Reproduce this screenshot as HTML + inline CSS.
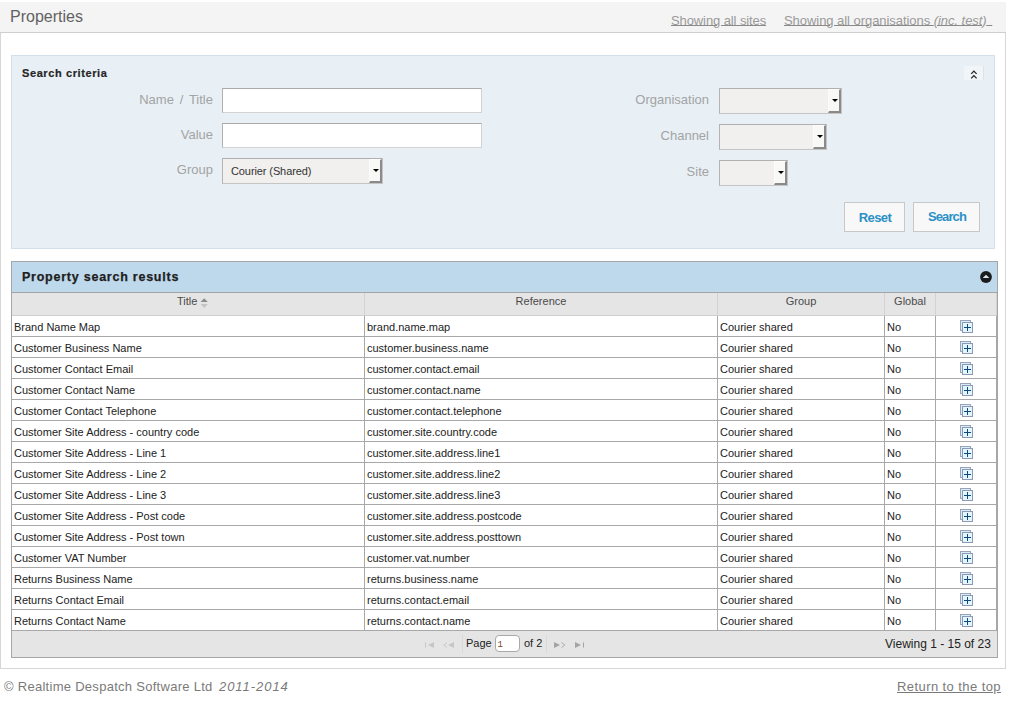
<!DOCTYPE html>
<html><head><meta charset="utf-8">
<style>
*{box-sizing:border-box;margin:0;padding:0}
html,body{width:1010px;height:702px;overflow:hidden;background:#fff;font-family:"Liberation Sans",sans-serif;position:relative}
.abs{position:absolute}
#hdr{left:0;top:2px;width:1006px;height:31px;background:#f4f4f4;border-bottom:1px solid #cfcfcf}
#title{left:10px;top:5px;font-size:16px;color:#626262;line-height:20px}
.toplink{top:11px;text-underline-offset:0px;font-size:13px;color:#9a9a9a;text-decoration:underline;text-decoration-color:#8a8a8a;line-height:16px;white-space:pre}
#panel{left:0;top:33px;width:1006px;height:636px;border:1px solid #d6d6d6;border-top:none}
#crit{left:11px;top:55px;width:984px;height:194px;background:#e8f0f6;border:1px solid #d3e0ea}
#crit h3{position:absolute;left:10px;top:10px;font-size:11px;letter-spacing:0.6px;font-weight:bold;color:#262626;line-height:14px;-webkit-text-stroke:0.2px #262626}
.lbl{font-size:13px;color:#a3a3a3;line-height:16px;text-align:right;white-space:pre}
.inp{background:#fff;border:1px solid #d3d3d3;border-top-color:#a9a9a9;border-left-color:#b1b1b1}
.sel{background:#f1f0ee;border:1px solid #c4c4c4;border-top-color:#b0b0b0;border-left-color:#b4b4b4}
.selbtn{position:absolute;top:0;right:0;bottom:0;width:13px;background:#f8f8f7;border-top:1px solid #fdfdfd;border-left:1px solid #fbfbfa;border-right:2px solid #8a8a8a;border-bottom:2px solid #8a8a8a}
.selbtn:after{content:"";position:absolute;left:2.7px;top:9px;border-left:3.7px solid transparent;border-right:3.7px solid transparent;border-top:3.7px solid #000}
.seltxt{position:absolute;left:8px;top:6px;font-size:11px;letter-spacing:-0.1px;color:#333;line-height:13px;white-space:pre}
.btn{background:#f8f8f8;border:1px solid #c8c8c8;color:#2b90c6;font-weight:bold;font-size:13px;text-align:center;line-height:16px}
#chev{left:964px;top:66px;width:20px;height:14px;background:#f2f5f8;border-right:1px solid #dde3e8}
#res{left:11px;top:261px;width:987px;height:397px;border:1px solid #a6a6a6}
#resh{left:0;top:0;width:985px;height:31px;background:#bed8ec;border-bottom:1px solid #a4a4a4}
#resh span{position:absolute;left:10px;top:7px;font-size:12.5px;font-weight:bold;color:#1e1e1e;letter-spacing:0.76px;line-height:16px;-webkit-text-stroke:0.25px #1e1e1e}
#thr{left:0;top:31px;width:985px;height:23px;background:#e5e5e5;border-bottom:1px solid #cfcfcf;display:flex}
#thr div{height:22px;border-right:1px solid #d2d2d2;font-size:11px;color:#4a4a4a;text-align:center;line-height:13px;padding-top:2px}
#rows{left:0;top:54px;width:985px}
.tr{display:flex;height:21px}
.tr div{height:21px;border-right:1px solid #a8a8a8;border-bottom:1px solid #a8a8a8;font-size:11px;color:#222;line-height:13px;padding:5px 0 0 2px;white-space:nowrap;overflow:hidden}
.c1{width:353px}.c2{width:353px}.c3{width:167px}.c4{width:51px}.c5{width:61px}
.tr .c5{padding:4px 0 0 24px}
.c5 svg{display:block}
#pager{left:0;top:369px;width:985px;height:26px;background:#e5e5e5}
.pg{font-size:11px;color:#222;line-height:13px;white-space:pre}
.sep{width:1px;background:#d9d9d9;top:4px;height:18px}
.foot{font-size:13px;color:#7a7a7a;line-height:16px;white-space:pre}
</style></head><body>
<div id="hdr" class="abs">
  <div id="title" class="abs">Properties</div>
  <div class="abs toplink" style="left:671px;letter-spacing:-0.1px">Showing all sites</div>
  <div class="abs toplink" style="left:784px;letter-spacing:-0.05px">Showing all organisations <i>(inc. test)</i><span style="letter-spacing:2px"> </span></div>
</div>
<div id="panel" class="abs"></div>

<div id="crit" class="abs">
  <h3>Search criteria</h3>
</div>
<div id="chev" class="abs"><svg width="20" height="15" viewBox="0 0 20 15" style="position:absolute;left:0;top:0"><path d="M7.2 7.9L9.9 5.1L12.6 7.9M7.2 12.4L9.9 9.6L12.6 12.4" fill="none" stroke="#222" stroke-width="1.25"/></svg></div>

<div class="abs lbl" style="left:113px;width:100px;top:92px;word-spacing:2.2px">Name / Title</div>
<div class="abs lbl" style="left:113px;width:100px;top:127px">Value</div>
<div class="abs lbl" style="left:113px;width:100px;top:162px">Group</div>
<div class="abs inp" style="left:222px;top:88px;width:260px;height:25px"></div>
<div class="abs inp" style="left:222px;top:123px;width:260px;height:25px"></div>
<div class="abs sel" style="left:222px;top:158px;width:161px;height:26px"><span class="seltxt">Courier (Shared)</span><div class="selbtn"></div></div>

<div class="abs lbl" style="left:609px;width:100px;top:92px">Organisation</div>
<div class="abs lbl" style="left:609px;width:100px;top:128px">Channel</div>
<div class="abs lbl" style="left:609px;width:100px;top:164px">Site</div>
<div class="abs sel" style="left:719px;top:88px;width:123px;height:26px"><div class="selbtn"></div></div>
<div class="abs sel" style="left:719px;top:124px;width:108px;height:26px"><div class="selbtn"></div></div>
<div class="abs sel" style="left:719px;top:160px;width:69px;height:26px"><div class="selbtn"></div></div>

<div class="abs btn" style="left:844px;top:202px;width:61px;height:30px;padding-top:7px;letter-spacing:-0.6px;padding-left:1px">Reset</div>
<div class="abs btn" style="left:913px;top:202px;width:67px;height:30px;padding-top:6px;letter-spacing:-0.9px;padding-left:1px">Search</div>

<div id="res" class="abs">
  <div id="resh" class="abs"><span>Property search results</span>
    <svg class="abs" style="left:968px;top:9px" width="13" height="13" viewBox="0 0 13 13"><circle cx="6" cy="6" r="5.9" fill="#1b1b1b"/><path d="M2.7 7.1L6 3.8L9.3 7.1Z" fill="#d6e9f6"/></svg>
  </div>
  <div id="thr" class="abs">
    <div class="c1" style="text-align:left;padding-left:165px">Title<svg width="9" height="11" viewBox="0 0 9 11" style="vertical-align:-3px;margin-left:2.6px"><path d="M0.6 5L4.2 1.2L7.8 5Z" fill="#8c8c8c"/><path d="M0.6 7.1L4.2 10.9L7.8 7.1Z" fill="#c4c4c4"/></svg></div>
    <div class="c2">Reference</div>
    <div class="c3">Group</div>
    <div class="c4">Global</div>
    <div class="c5"></div>
  </div>
  <div id="rows" class="abs">
<div class="tr"><div class="c1">Brand Name Map</div><div class="c2">brand.name.map</div><div class="c3">Courier shared</div><div class="c4">No</div><div class="c5"><svg width="13" height="13" viewBox="0 0 13 13"><rect x="0.5" y="0.5" width="10" height="10" fill="#d6eefa" stroke="#9aa3ba"/><rect x="2.5" y="2.5" width="10" height="10" fill="#e4f6fd" stroke="#8e98b0"/><path d="M4 7.5H11M7.5 4V11" stroke="#0b4a7e" stroke-width="1"/></svg></div></div>
<div class="tr"><div class="c1">Customer Business Name</div><div class="c2">customer.business.name</div><div class="c3">Courier shared</div><div class="c4">No</div><div class="c5"><svg width="13" height="13" viewBox="0 0 13 13"><rect x="0.5" y="0.5" width="10" height="10" fill="#d6eefa" stroke="#9aa3ba"/><rect x="2.5" y="2.5" width="10" height="10" fill="#e4f6fd" stroke="#8e98b0"/><path d="M4 7.5H11M7.5 4V11" stroke="#0b4a7e" stroke-width="1"/></svg></div></div>
<div class="tr"><div class="c1">Customer Contact Email</div><div class="c2">customer.contact.email</div><div class="c3">Courier shared</div><div class="c4">No</div><div class="c5"><svg width="13" height="13" viewBox="0 0 13 13"><rect x="0.5" y="0.5" width="10" height="10" fill="#d6eefa" stroke="#9aa3ba"/><rect x="2.5" y="2.5" width="10" height="10" fill="#e4f6fd" stroke="#8e98b0"/><path d="M4 7.5H11M7.5 4V11" stroke="#0b4a7e" stroke-width="1"/></svg></div></div>
<div class="tr"><div class="c1">Customer Contact Name</div><div class="c2">customer.contact.name</div><div class="c3">Courier shared</div><div class="c4">No</div><div class="c5"><svg width="13" height="13" viewBox="0 0 13 13"><rect x="0.5" y="0.5" width="10" height="10" fill="#d6eefa" stroke="#9aa3ba"/><rect x="2.5" y="2.5" width="10" height="10" fill="#e4f6fd" stroke="#8e98b0"/><path d="M4 7.5H11M7.5 4V11" stroke="#0b4a7e" stroke-width="1"/></svg></div></div>
<div class="tr"><div class="c1">Customer Contact Telephone</div><div class="c2">customer.contact.telephone</div><div class="c3">Courier shared</div><div class="c4">No</div><div class="c5"><svg width="13" height="13" viewBox="0 0 13 13"><rect x="0.5" y="0.5" width="10" height="10" fill="#d6eefa" stroke="#9aa3ba"/><rect x="2.5" y="2.5" width="10" height="10" fill="#e4f6fd" stroke="#8e98b0"/><path d="M4 7.5H11M7.5 4V11" stroke="#0b4a7e" stroke-width="1"/></svg></div></div>
<div class="tr"><div class="c1">Customer Site Address - country code</div><div class="c2">customer.site.country.code</div><div class="c3">Courier shared</div><div class="c4">No</div><div class="c5"><svg width="13" height="13" viewBox="0 0 13 13"><rect x="0.5" y="0.5" width="10" height="10" fill="#d6eefa" stroke="#9aa3ba"/><rect x="2.5" y="2.5" width="10" height="10" fill="#e4f6fd" stroke="#8e98b0"/><path d="M4 7.5H11M7.5 4V11" stroke="#0b4a7e" stroke-width="1"/></svg></div></div>
<div class="tr"><div class="c1">Customer Site Address - Line 1</div><div class="c2">customer.site.address.line1</div><div class="c3">Courier shared</div><div class="c4">No</div><div class="c5"><svg width="13" height="13" viewBox="0 0 13 13"><rect x="0.5" y="0.5" width="10" height="10" fill="#d6eefa" stroke="#9aa3ba"/><rect x="2.5" y="2.5" width="10" height="10" fill="#e4f6fd" stroke="#8e98b0"/><path d="M4 7.5H11M7.5 4V11" stroke="#0b4a7e" stroke-width="1"/></svg></div></div>
<div class="tr"><div class="c1">Customer Site Address - Line 2</div><div class="c2">customer.site.address.line2</div><div class="c3">Courier shared</div><div class="c4">No</div><div class="c5"><svg width="13" height="13" viewBox="0 0 13 13"><rect x="0.5" y="0.5" width="10" height="10" fill="#d6eefa" stroke="#9aa3ba"/><rect x="2.5" y="2.5" width="10" height="10" fill="#e4f6fd" stroke="#8e98b0"/><path d="M4 7.5H11M7.5 4V11" stroke="#0b4a7e" stroke-width="1"/></svg></div></div>
<div class="tr"><div class="c1">Customer Site Address - Line 3</div><div class="c2">customer.site.address.line3</div><div class="c3">Courier shared</div><div class="c4">No</div><div class="c5"><svg width="13" height="13" viewBox="0 0 13 13"><rect x="0.5" y="0.5" width="10" height="10" fill="#d6eefa" stroke="#9aa3ba"/><rect x="2.5" y="2.5" width="10" height="10" fill="#e4f6fd" stroke="#8e98b0"/><path d="M4 7.5H11M7.5 4V11" stroke="#0b4a7e" stroke-width="1"/></svg></div></div>
<div class="tr"><div class="c1">Customer Site Address - Post code</div><div class="c2">customer.site.address.postcode</div><div class="c3">Courier shared</div><div class="c4">No</div><div class="c5"><svg width="13" height="13" viewBox="0 0 13 13"><rect x="0.5" y="0.5" width="10" height="10" fill="#d6eefa" stroke="#9aa3ba"/><rect x="2.5" y="2.5" width="10" height="10" fill="#e4f6fd" stroke="#8e98b0"/><path d="M4 7.5H11M7.5 4V11" stroke="#0b4a7e" stroke-width="1"/></svg></div></div>
<div class="tr"><div class="c1">Customer Site Address - Post town</div><div class="c2">customer.site.address.posttown</div><div class="c3">Courier shared</div><div class="c4">No</div><div class="c5"><svg width="13" height="13" viewBox="0 0 13 13"><rect x="0.5" y="0.5" width="10" height="10" fill="#d6eefa" stroke="#9aa3ba"/><rect x="2.5" y="2.5" width="10" height="10" fill="#e4f6fd" stroke="#8e98b0"/><path d="M4 7.5H11M7.5 4V11" stroke="#0b4a7e" stroke-width="1"/></svg></div></div>
<div class="tr"><div class="c1">Customer VAT Number</div><div class="c2">customer.vat.number</div><div class="c3">Courier shared</div><div class="c4">No</div><div class="c5"><svg width="13" height="13" viewBox="0 0 13 13"><rect x="0.5" y="0.5" width="10" height="10" fill="#d6eefa" stroke="#9aa3ba"/><rect x="2.5" y="2.5" width="10" height="10" fill="#e4f6fd" stroke="#8e98b0"/><path d="M4 7.5H11M7.5 4V11" stroke="#0b4a7e" stroke-width="1"/></svg></div></div>
<div class="tr"><div class="c1">Returns Business Name</div><div class="c2">returns.business.name</div><div class="c3">Courier shared</div><div class="c4">No</div><div class="c5"><svg width="13" height="13" viewBox="0 0 13 13"><rect x="0.5" y="0.5" width="10" height="10" fill="#d6eefa" stroke="#9aa3ba"/><rect x="2.5" y="2.5" width="10" height="10" fill="#e4f6fd" stroke="#8e98b0"/><path d="M4 7.5H11M7.5 4V11" stroke="#0b4a7e" stroke-width="1"/></svg></div></div>
<div class="tr"><div class="c1">Returns Contact Email</div><div class="c2">returns.contact.email</div><div class="c3">Courier shared</div><div class="c4">No</div><div class="c5"><svg width="13" height="13" viewBox="0 0 13 13"><rect x="0.5" y="0.5" width="10" height="10" fill="#d6eefa" stroke="#9aa3ba"/><rect x="2.5" y="2.5" width="10" height="10" fill="#e4f6fd" stroke="#8e98b0"/><path d="M4 7.5H11M7.5 4V11" stroke="#0b4a7e" stroke-width="1"/></svg></div></div>
<div class="tr"><div class="c1">Returns Contact Name</div><div class="c2">returns.contact.name</div><div class="c3">Courier shared</div><div class="c4">No</div><div class="c5"><svg width="13" height="13" viewBox="0 0 13 13"><rect x="0.5" y="0.5" width="10" height="10" fill="#d6eefa" stroke="#9aa3ba"/><rect x="2.5" y="2.5" width="10" height="10" fill="#e4f6fd" stroke="#8e98b0"/><path d="M4 7.5H11M7.5 4V11" stroke="#0b4a7e" stroke-width="1"/></svg></div></div>
  </div>
  <div id="pager" class="abs">
    <svg class="abs" style="left:413px;top:11px" width="10" height="6" viewBox="0 0 10 6"><rect x="0" y="0.5" width="1" height="5" fill="#c6c6c6"/><path d="M3 3L9 0V6Z" fill="#c6c6c6"/></svg>
    <svg class="abs" style="left:431px;top:11px" width="12" height="6" viewBox="0 0 12 6"><path d="M4 0.5L0.8 3L4 5.5" fill="none" stroke="#c6c6c6" stroke-width="0.9"/><path d="M5 3L11 0V6Z" fill="#c6c6c6"/></svg>
    <div class="abs sep" style="left:450px"></div>
    <div class="abs pg" style="left:454px;top:6px">Page</div>
    <div class="abs" style="left:483px;top:4px;width:25px;height:17px;background:#fff;border:1px solid #a9a9a9;border-radius:4px"><span class="abs" style="left:1.5px;top:4px;font-family:'Liberation Mono',monospace;font-size:9px;line-height:10px;color:#7a4a20">1</span></div>
    <div class="abs pg" style="left:512px;top:6px">of 2</div>
    <div class="abs sep" style="left:534px"></div>
    <svg class="abs" style="left:542px;top:11px" width="12" height="6" viewBox="0 0 12 6"><path d="M0 0V6L6 3Z" fill="#a4a4a4"/><path d="M7.5 0.5L10.8 3L7.5 5.5" fill="none" stroke="#a4a4a4" stroke-width="0.9"/></svg>
    <svg class="abs" style="left:563px;top:11px" width="10" height="6" viewBox="0 0 10 6"><path d="M0 0V6L6 3Z" fill="#a4a4a4"/><rect x="8" y="0.5" width="1" height="5" fill="#a4a4a4"/></svg>
    <div class="abs pg" style="left:873px;top:6px;font-size:12px;line-height:14px">Viewing 1 - 15 of 23</div>
  </div>
</div>

<div class="abs foot" style="left:4px;top:679px;letter-spacing:0.28px">© Realtime Despatch Software Ltd</div><div class="abs foot" style="left:219px;top:679px;letter-spacing:0.95px;font-style:italic">2011-2014</div>
<div class="abs foot" style="left:897px;top:679px;text-decoration:underline;letter-spacing:0.42px">Return to the top</div>
</body></html>
